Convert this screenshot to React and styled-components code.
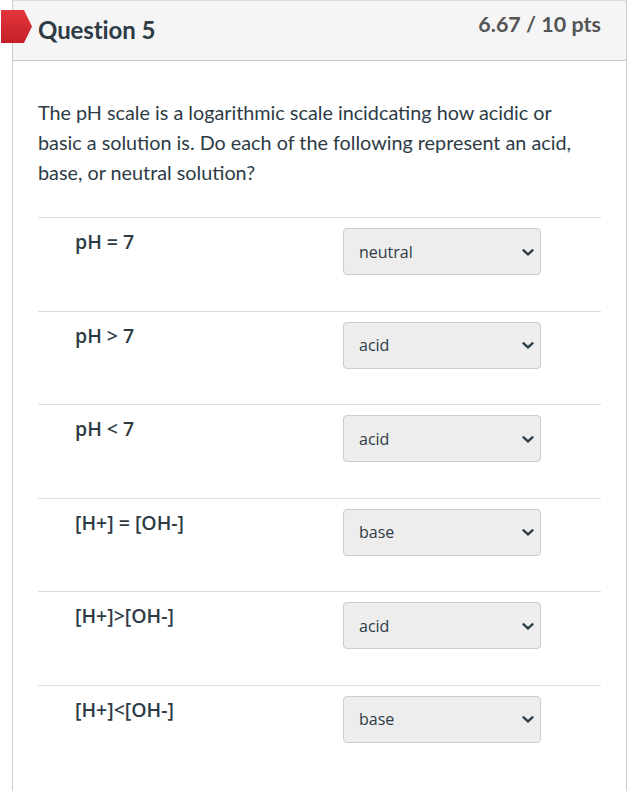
import React from 'react'
import styled, { createGlobalStyle } from 'styled-components'

const GlobalStyle = createGlobalStyle`
  html, body { margin: 0; padding: 0; background: #fff; }
  body { font-family: Lato, "Liberation Sans", sans-serif; color: #2d3b45; }
`

const rows = [
  { label: 'pH = 7', value: 'neutral' },
  { label: 'pH > 7', value: 'acid' },
  { label: 'pH < 7', value: 'acid' },
  { label: '[H+] = [OH-]', value: 'base' },
  { label: '[H+]>[OH-]', value: 'acid' },
  { label: '[H+]<[OH-]', value: 'base' },
]

const Page = styled.div`
  padding: 0 16px 0 12px;
  height: 791px;
  box-sizing: border-box;
  overflow: hidden;
`

const Card = styled.div`
  position: relative;
  border: 1px solid #c7cdd1;
  border-top-color: #ddd;
  border-bottom: none;
  min-height: 791px;
  box-sizing: border-box;
`

const Header = styled.div`
  display: flex;
  justify-content: space-between;
  align-items: flex-start;
  height: 59px;
  padding: 0 25px 0 25px;
  background: #f5f5f5;
  border-bottom: 1px solid #c7cdd1;
`

const Flag = styled.div`
  position: absolute;
  left: -12px;
  top: 9px;
  width: 31px;
  height: 33px;
  background: linear-gradient(#e3353a, #c4202a);
  clip-path: polygon(0 0, 74% 0, 100% 50%, 74% 100%, 0 100%);
`

const Title = styled.h2`
  margin: 14px 0 0;
  font-size: 24px;
  font-weight: 700;
  color: #2d3b45;
  letter-spacing: -0.1px;
`

const Points = styled.div`
  margin-top: 10px;
  font-size: 21.5px;
  font-weight: 700;
  color: #555;
`

const Body = styled.div`
  padding: 36px 13px 0 25px;
`

const Prompt = styled.p`
  margin: 0 0 30px;
  max-width: 550px;
  font-size: 19.8px;
  line-height: 30px;
  color: #2d3b45;
`

const Row = styled.div`
  display: flex;
  border-top: 1px solid #ddd;
  height: 92.6px;
  margin-right: 12px;
`

const Label = styled.div`
  width: 268px;
  padding: 10px 0 0 37px;
  font-family: "Open Sans", "Liberation Sans", sans-serif;
  font-weight: 600;
  font-size: 19.5px;
  color: #2d3b45;
`

const SelectBox = styled.div`
  margin-top: 10px;
  width: 198px;
  height: 47px;
  box-sizing: border-box;
  display: flex;
  align-items: center;
  justify-content: space-between;
  padding: 0 5px 0 15px;
  background: #ededed;
  border: 1px solid #c7cdd1;
  border-radius: 4px;
  font-family: "Open Sans", "Liberation Sans", sans-serif;
  font-size: 16px;
  color: #2d3b45;
`

const Chevron = () => (
  <svg width="14" height="12" viewBox="0 0 14 12">
    <path d="M1.8 3.6 L7 8.4 L12.2 3.6" fill="none" stroke="#2d3b45" strokeWidth="2.2" />
  </svg>
)

export default function App() {
  return (
    <Page>
      <GlobalStyle />
      <Card>
        <Flag />
        <Header>
          <Title>Question 5</Title>
          <Points>6.67 / 10 pts</Points>
        </Header>
        <Body>
          <Prompt>
            The pH scale is a logarithmic scale incidcating how acidic or basic a solution is. Do each of the following represent an acid, base, or neutral solution?
          </Prompt>
          {rows.map((r, i) => (
            <Row key={i}>
              <Label>{r.label}</Label>
              <SelectBox>
                <span>{r.value}</span>
                <Chevron />
              </SelectBox>
            </Row>
          ))}
        </Body>
      </Card>
    </Page>
  )
}
